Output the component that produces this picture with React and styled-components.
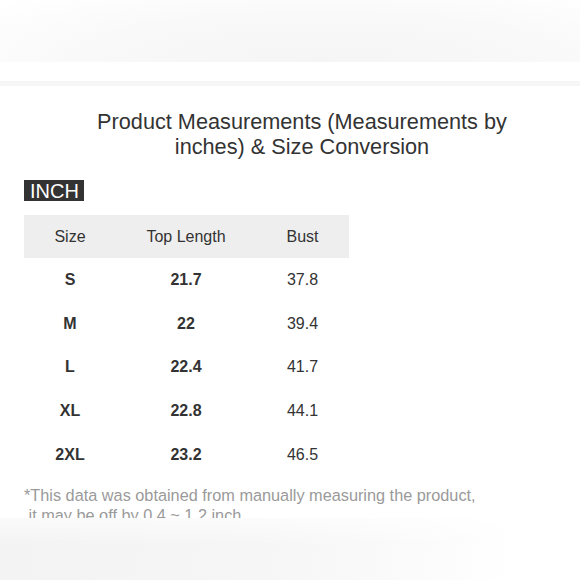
import React from 'react'
import styled, { createGlobalStyle } from 'styled-components'

const GlobalStyle = createGlobalStyle`
  html, body {
    margin: 0;
    padding: 0;
    background: #ffffff;
  }
  body {
    font-family: 'Liberation Sans', Arial, Helvetica, sans-serif;
    color: #333333;
  }
`

const ROWS = [
  { size: 'S', length: '21.7', bust: '37.8' },
  { size: 'M', length: '22', bust: '39.4' },
  { size: 'L', length: '22.4', bust: '41.7' },
  { size: 'XL', length: '22.8', bust: '44.1' },
  { size: '2XL', length: '23.2', bust: '46.5' }
]

const Page = styled.div`
  width: 580px;
  height: 580px;
  overflow: hidden;
  display: flex;
  flex-direction: column;
`

const TopShade = styled.div`
  height: 62px;
  flex: 0 0 auto;
  background: radial-gradient(
    ellipse 75% 140% at 55% 100%,
    #f5f5f5 0%,
    #f9f9f9 55%,
    #ffffff 100%
  );
`

const Divider = styled.div`
  flex: 0 0 auto;
  height: 5px;
  margin-top: 19px;
  background: #f6f6f6;
`

const Content = styled.div`
  flex: 0 0 auto;
  padding: 0 0 0 24px;
`

const Title = styled.h1`
  width: 440px;
  margin: 23px auto 0;
  font-size: 21.7px;
  line-height: 25px;
  font-weight: 400;
  text-align: center;
  color: #333333;
`

const UnitTag = styled.div`
  display: inline-block;
  margin-top: 21px;
  height: 21px;
  padding: 0 5px 0 6px;
  background: #333333;
  color: #ffffff;
  font-size: 20px;
  line-height: 22px;
`

const Table = styled.div`
  width: 325px;
  margin-top: 13px;
`

const Row = styled.div`
  display: grid;
  grid-template-columns: 92px 140px 93px;
  align-items: center;
  height: ${props => (props.head ? '43px' : '43.6px')};
  padding-top: 1px;
  box-sizing: border-box;
  background: ${props => (props.head ? '#eeeeee' : 'transparent')};
`

const Cell = styled.div`
  text-align: center;
  font-size: 16px;
  font-weight: ${props => (props.bold ? 700 : 400)};
  color: #333333;
`

const Note = styled.div`
  margin-top: 9px;
  height: 33px;
  overflow: hidden;
  font-size: 16.3px;
  line-height: 20px;
  color: #9a9a9a;
`

const BottomShade = styled.div`
  flex: 1 1 auto;
  background:
    linear-gradient(to bottom, rgba(255, 255, 255, 0.6), rgba(255, 255, 255, 0) 45%),
    linear-gradient(to right, #f3f3f3 0%, #f6f6f6 45%, #fbfbfb 72%, #ffffff 88%);
`

export default function App () {
  return (
    <Page>
      <GlobalStyle />
      <TopShade />
      <Divider />
      <Content>
        <Title>
          Product Measurements (Measurements by inches) &amp; Size Conversion
        </Title>
        <UnitTag>INCH</UnitTag>
        <Table>
          <Row head>
            <Cell>Size</Cell>
            <Cell>Top Length</Cell>
            <Cell>Bust</Cell>
          </Row>
          {ROWS.map(row => (
            <Row key={row.size}>
              <Cell bold>{row.size}</Cell>
              <Cell bold>{row.length}</Cell>
              <Cell>{row.bust}</Cell>
            </Row>
          ))}
        </Table>
        <Note>
          *This data was obtained from manually measuring the product,
          <br />
          &nbsp;it may be off by 0.4 ~ 1.2 inch
        </Note>
      </Content>
      <BottomShade />
    </Page>
  )
}
